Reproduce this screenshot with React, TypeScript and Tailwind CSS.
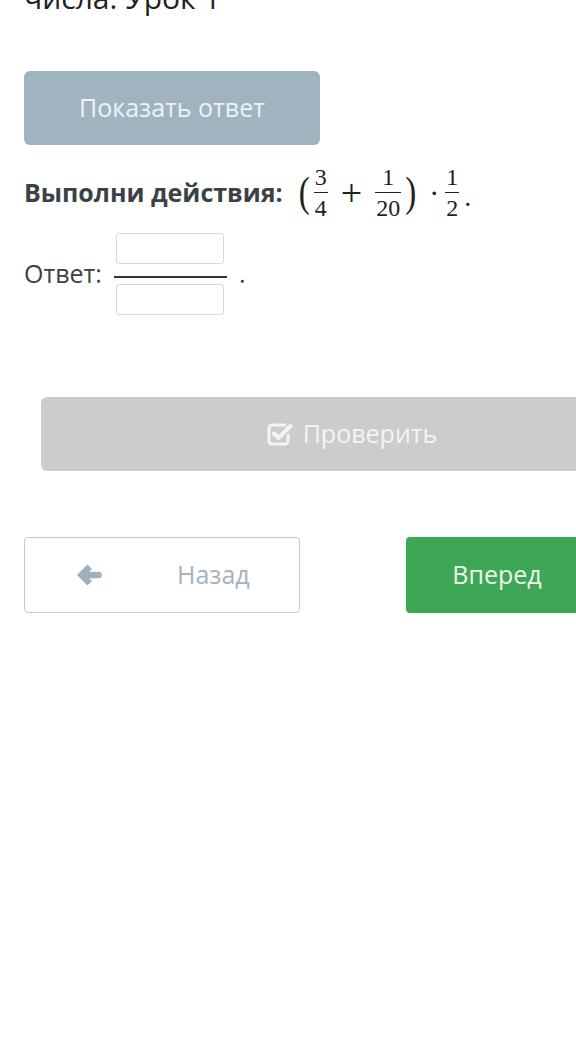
import React from "react";

const sans = "font-['Open_Sans',_'Liberation_Sans',_sans-serif]";
const serif = "font-['Liberation_Serif',_'DejaVu_Serif',_serif]";

function Frac({ top, bottom }: { top: string; bottom: string }) {
  return (
    <span className={`inline-flex flex-col items-center ${serif} text-[24px] leading-none text-[#222]`}>
      <span className="px-[1px] pb-[3px]">{top}</span>
      <span className="h-px w-full bg-[#222]" />
      <span className="px-[1px] pt-[3px]">{bottom}</span>
    </span>
  );
}

function AnswerInput() {
  return (
    <input
      type="text"
      className="h-[31px] w-[108px] rounded-[3px] border border-[#d4d9dd] bg-white outline-none"
    />
  );
}

function CheckSquareIcon() {
  return (
    <svg width="26" height="24" viewBox="0 0 26 24" fill="none" stroke="currentColor" strokeLinecap="round" strokeLinejoin="round">
      <path d="M18 3H5a3 3 0 0 0-3 3v13a3 3 0 0 0 3 3h13a3 3 0 0 0 3-3v-6" strokeWidth="3" />
      <path d="M7 11.5l4.5 4.5L23.5 4" strokeWidth="4" />
    </svg>
  );
}

function ArrowLeftIcon() {
  return (
    <svg width="26" height="22" viewBox="0 0 26 22" fill="currentColor">
      <path
        d="M11.5 1.5L2 11l9.5 9.5 3.5-3.5-3.5-3.5H23a2 2 0 0 0 2-2v-1a2 2 0 0 0-2-2H11.5L15 5z"
        stroke="currentColor"
        strokeWidth="1.5"
        strokeLinejoin="round"
      />
    </svg>
  );
}

export default function App() {
  return (
    <div className={`min-h-screen w-full overflow-hidden bg-white ${sans}`}>
      <div className="px-6">
        <h1 className="mt-[-22px] text-[30px] leading-[40px] font-normal text-[#222] whitespace-nowrap">
          числа. Урок 1
        </h1>

        <button className="mt-[53px] flex h-[74px] w-[296px] items-center justify-center rounded-md bg-[#a0b4c0] text-[25px] text-[#eef2f5]">
          Показать ответ
        </button>

        <div className="mt-[20px] flex items-center whitespace-nowrap">
          <span className="text-[25px] font-bold text-[#3a4147]">Выполни действия:</span>
          <span className="ml-[16px] flex items-center">
            <span className={`${serif} inline-block scale-y-125 text-[33px] leading-none text-[#222] mr-[4px]`}>(</span>
            <Frac top="3" bottom="4" />
            <span className={`${serif} mx-[13px] text-[38px] leading-none text-[#222]`}>+</span>
            <Frac top="1" bottom="20" />
            <span className={`${serif} inline-block scale-y-125 ml-[4px] text-[33px] leading-none text-[#222]`}>)</span>
            <span className={`${serif} ml-[13px] mr-[6px] text-[30px] leading-none text-[#222]`}>·</span>
            <Frac top="1" bottom="2" />
            <span className={`${serif} ml-[5px] self-end mb-[9px] text-[28px] leading-none text-[#222]`}>.</span>
          </span>
        </div>

        <div className="mt-[13px] flex items-center">
          <span className="text-[25px] text-[#3a4147]">Ответ:</span>
          <div className="ml-[12px] flex w-[113px] flex-col items-center">
            <AnswerInput />
            <div className="mt-[12px] mb-[6px] h-[2px] w-full bg-[#333]" />
            <AnswerInput />
          </div>
          <span className="ml-[12px] text-[25px] text-[#3a4147]">.</span>
        </div>
      </div>

      <div className="mt-[82px] pl-[41px]">
        <button className="flex h-[74px] w-[622px] items-center justify-center gap-[10px] rounded-md bg-[#cccccc] text-[25px] text-[#f4f4f4]">
          <CheckSquareIcon />
          Проверить
        </button>
      </div>

      <div className="mt-[66px] flex items-center pl-6 gap-[106px]">
        <button className="flex h-[76px] w-[276px] shrink-0 items-center rounded-[4px] border border-[#c3c9cd] bg-white text-[25px] text-[#a3b3bf]">
          <span className="ml-[51px] text-[#9fb1bd]">
            <ArrowLeftIcon />
          </span>
          <span className="ml-[75px]">Назад</span>
        </button>
        <button className="flex h-[76px] w-[182px] shrink-0 items-center justify-center rounded-[4px] bg-[#3ea756] text-[25px] text-[#eaf6ec]">
          Вперед
        </button>
      </div>
    </div>
  );
}
